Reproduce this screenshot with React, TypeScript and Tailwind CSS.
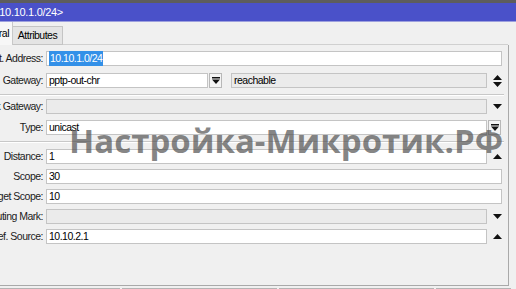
import type { ReactNode } from 'react';

const ui = "font-['Liberation_Sans',Arial,sans-serif]";

function Down() {
  return (
    <svg width="9" height="5" viewBox="0 0 9 5" className="block">
      <path d="M0 0h9L4.5 5z" fill="#111" />
    </svg>
  );
}

function Up() {
  return (
    <svg width="9" height="5" viewBox="0 0 9 5" className="block">
      <path d="M0 5h9L4.5 0z" fill="#111" />
    </svg>
  );
}

function UpDown() {
  return (
    <svg width="9" height="12" viewBox="0 0 9 12" className="block">
      <path d="M0 5h9L4.5 0z M0 7h9L4.5 12z" fill="#111" />
    </svg>
  );
}

// bar + down triangle, the drop-down button glyph
function BarDown() {
  return (
    <svg width="8" height="7" viewBox="0 0 8 7" className="block">
      <path d="M0 0h8v1.4H0z M0 2.5h8L4 7z" fill="#111" />
    </svg>
  );
}

function Row({ label, mt, children }: { label: string; mt: string; children: ReactNode }) {
  return (
    <div className={`flex items-center h-[15px] ${mt}`}>
      <div className="w-[43px] shrink-0 flex justify-end whitespace-nowrap text-[#1b1b1b]">{label}</div>
      <div className="ml-[3px] flex items-center h-full">{children}</div>
    </div>
  );
}

const white = 'h-[15px] bg-white border border-[#c4c4c4] px-[2px] flex items-center whitespace-nowrap';
const gray = 'h-[15px] bg-[#ebebeb] border border-[#c4c4c4] px-[2px] flex items-center whitespace-nowrap';

function IconCell({ children }: { children: ReactNode }) {
  return <div className="w-[21px] flex justify-center items-center">{children}</div>;
}

function Separator({ mt }: { mt: string }) {
  return (
    <div className={`${mt} w-[504px]`}>
      <div className="h-px bg-[#c8c8c8]" />
      <div className="h-px bg-white" />
    </div>
  );
}

export default function App() {
  return (
    <div className={`relative w-[516px] h-[289px] overflow-hidden bg-[#f0f0f0] text-[10.5px] tracking-[-0.5px] text-black ${ui}`}>
      {/* title bar */}
      <div className="h-[3px] bg-[#5d5d5d]" />
      <div className="h-[18px] bg-[#4a51c9] flex items-center text-white text-[11px] tracking-[-0.3px]">
        <div className="w-[63px] shrink-0 flex justify-end">
          <span className="whitespace-nowrap">Route &lt;10.10.1.0/24&gt;</span>
        </div>
      </div>
      <div className="h-px bg-[#9da0de]" />

      {/* tabs */}
      <div className="flex items-end h-[23px]">
        <div className="w-[13px] h-[23px] shrink-0 flex justify-end items-center bg-[#f7f7f7] border-r border-[#c8c8c8]">
          <span className="whitespace-nowrap pr-[3px]">General</span>
        </div>
        <div className="w-[50px] h-[19px] shrink-0 flex items-center justify-center bg-[#e4e4e4] border border-[#c4c4c4] border-l-0">
          Attributes
        </div>
        <div className="w-[445px] h-px bg-[#d0d0d0]" />
      </div>

      {/* panel */}
      <div className="w-[509px] h-[240px] border-r border-[#a9a9a9] flex flex-col">
        <Row label="Dst. Address:" mt="mt-[6px]">
          <div className={`${white} w-[456px]`}>
            <span className="bg-[#3390e8] text-white px-px">10.10.1.0/24</span>
          </div>
        </Row>
        <Row label="Gateway:" mt="mt-[7px]">
          <div className={`${white} w-[162px]`}>pptp-out-chr</div>
          <div className="ml-px w-[13px] h-[15px] border border-[#b8b8b8] bg-[#f4f4f4] flex items-center justify-center">
            <BarDown />
          </div>
          <div className={`${gray} ml-[9px] w-[256px]`}>reachable</div>
          <IconCell><UpDown /></IconCell>
        </Row>
        <Separator mt="mt-[6px]" />
        <Row label="Check Gateway:" mt="mt-[3px]">
          <div className={`${gray} w-[441px]`} />
          <IconCell><Down /></IconCell>
        </Row>
        <Row label="Type:" mt="mt-[6px]">
          <div className={`${white} w-[441px]`}>unicast</div>
          <div className="ml-px w-[13px] h-[15px] border border-[#b8b8b8] bg-[#f4f4f4] flex items-center justify-center">
            <BarDown />
          </div>
        </Row>
        <Separator mt="mt-[6px]" />
        <Row label="Distance:" mt="mt-[6px]">
          <div className={`${white} w-[441px]`}>1</div>
          <IconCell><Up /></IconCell>
        </Row>
        <Row label="Scope:" mt="mt-[5px]">
          <div className={`${white} w-[456px]`}>30</div>
        </Row>
        <Row label="Target Scope:" mt="mt-[5px]">
          <div className={`${white} w-[456px]`}>10</div>
        </Row>
        <Row label="Routing Mark:" mt="mt-[5px]">
          <div className={`${gray} w-[441px]`} />
          <IconCell><Down /></IconCell>
        </Row>
        <Row label="Pref. Source:" mt="mt-[5px]">
          <div className={`${white} w-[441px]`}>10.10.2.1</div>
          <IconCell><Up /></IconCell>
        </Row>
      </div>

      {/* status bar */}
      <div className="h-px bg-[#a9a9a9] w-[509px]" />
      <div className="flex mt-[2px] h-[4px] gap-[2px]">
        <div className="w-[120px] border-t border-r border-[#b4b4b4]" />
        <div className="w-[155px] border-t border-x border-[#b4b4b4]" />
        <div className="w-[155px] border-t border-x border-[#b4b4b4]" />
        <div className="w-[75px] border-t border-x border-[#b4b4b4]" />
      </div>

      {/* watermark */}
      <div className="absolute left-[69px] top-[124px] font-['Open_Sans',sans-serif] font-bold text-[33px] leading-[33px] tracking-normal text-[#505050]/70 whitespace-nowrap pointer-events-none">
        Настройка-Микротик.РФ
      </div>
    </div>
  );
}
